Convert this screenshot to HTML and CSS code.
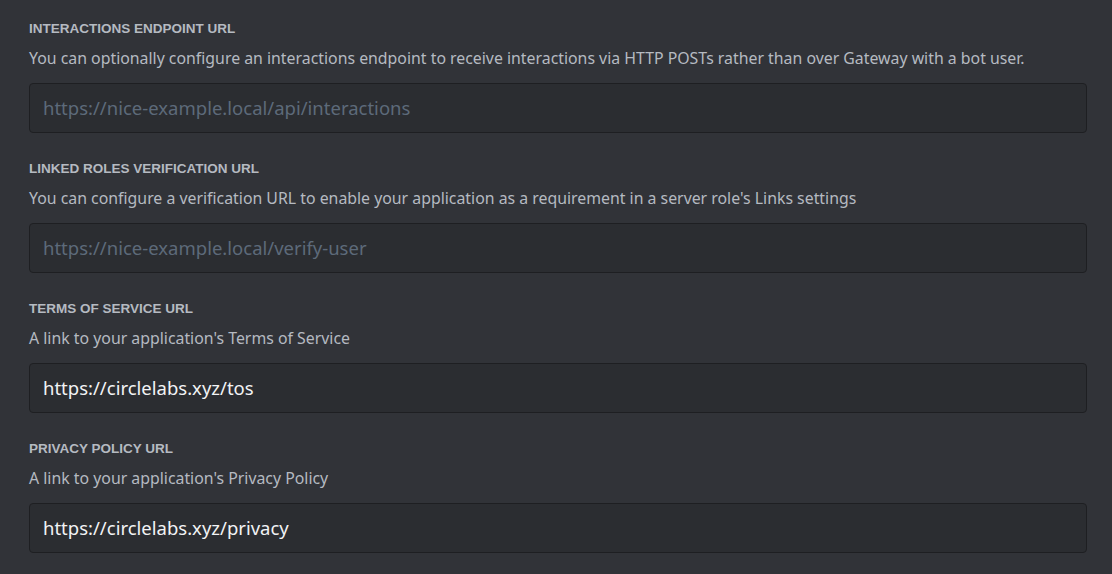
FILE: index.html
```html
<!DOCTYPE html>
<html>
<head>
<meta charset="utf-8">
<link rel="stylesheet" href="styles.css">
</head>
<body>
<div class="page">
  <div class="field">
    <h2 class="label">Interactions Endpoint URL</h2>
    <p class="desc">You can optionally configure an interactions endpoint to receive interactions via HTTP POSTs rather than over Gateway with a bot user.</p>
    <div class="input placeholder">https://nice-example.local/api/interactions</div>
  </div>
  <div class="field">
    <h2 class="label">Linked Roles Verification URL</h2>
    <p class="desc">You can configure a verification URL to enable your application as a requirement in a server role's Links settings</p>
    <div class="input placeholder">https://nice-example.local/verify-user</div>
  </div>
  <div class="field">
    <h2 class="label">Terms of Service URL</h2>
    <p class="desc">A link to your application's Terms of Service</p>
    <div class="input">https://circlelabs.xyz/tos</div>
  </div>
  <div class="field">
    <h2 class="label">Privacy Policy URL</h2>
    <p class="desc">A link to your application's Privacy Policy</p>
    <div class="input">https://circlelabs.xyz/privacy</div>
  </div>
</div>
</body>
</html>
```
FILE: styles.css
```css
html, body {
  margin: 0;
  padding: 0;
  background: #313338;
  height: 100%;
}
body {
  font-family: "Noto Sans", "Open Sans", sans-serif;
}
.page {
  padding: 21px 25px 0 29px;
  display: flex;
  flex-direction: column;
  gap: 28px;
}
.field {
  display: flex;
  flex-direction: column;
}
.label {
  margin: 0;
  font-size: 13.5px;
  line-height: 16px;
  font-weight: 700;
  text-transform: uppercase;
  color: #b5bac1;
  font-family: "Liberation Sans", Arial, sans-serif;
}
.desc {
  margin: 11px 0 0 0;
  font-size: 15.85px;
  line-height: 20px;
  color: #b5bac1;
}
.input {
  margin-top: 15px;
  box-sizing: border-box;
  height: 50px;
  border: 1px solid #1e1f22;
  background: #2b2d31;
  border-radius: 4px;
  padding: 0 13px 2px 13px;
  display: flex;
  align-items: center;
  font-size: 18.5px;
  color: #f2f3f5;
}
.input.placeholder {
  color: #5d6a7a;
}
```
